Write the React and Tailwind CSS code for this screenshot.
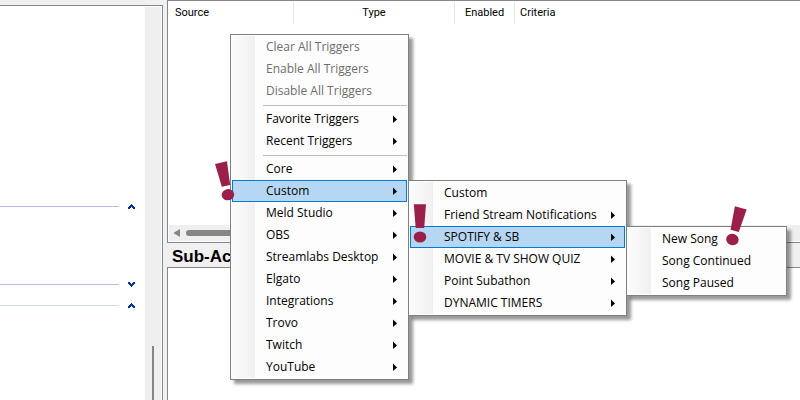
import React from "react";

const mainItems = [
  { label: "Clear All Triggers", disabled: true },
  { label: "Enable All Triggers", disabled: true },
  { label: "Disable All Triggers", disabled: true },
  { separator: true },
  { label: "Favorite Triggers", more: true },
  { label: "Recent Triggers", more: true },
  { separator: true },
  { label: "Core", more: true },
  {
    label: "Custom",
    more: true,
    submenu: {
      width: "w-[219px]",
      items: [
        { label: "Custom" },
        { label: "Friend Stream Notifications", more: true },
        {
          label: "SPOTIFY & SB",
          more: true,
          submenu: {
            width: "w-[161px]",
            items: [
              { label: "New Song" },
              { label: "Song Continued" },
              { label: "Song Paused" },
            ],
          },
        },
        { label: "MOVIE & TV SHOW QUIZ", more: true },
        { label: "Point Subathon", more: true },
        { label: "DYNAMIC TIMERS", more: true },
      ],
    },
  },
  { label: "Meld Studio", more: true },
  { label: "OBS", more: true },
  { label: "Streamlabs Desktop", more: true },
  { label: "Elgato", more: true },
  { label: "Integrations", more: true },
  { label: "Trovo", more: true },
  { label: "Twitch", more: true },
  { label: "YouTube", more: true },
];

function Menu({ items, width }) {
  return (
    <ul
      role="menu"
      className={`${width} border border-[#808080] bg-[#fdfdfd] p-px shadow-[4px_4px_3px_rgba(0,0,0,0.4)]`}
    >
      {items.map((item, i) => (
        <MenuRow key={i} item={item} />
      ))}
    </ul>
  );
}

function MenuRow({ item }) {
  const gutter = "bg-linear-to-r from-[#fcfcfc] to-[#f0f0f0]";
  if (item.separator) {
    return (
      <li role="separator" className="flex h-1.5">
        <span className={`w-[23px] ${gutter}`} />
        <span className="ml-2 mt-[3px] h-px flex-1 bg-[#bdbdbd]" />
      </li>
    );
  }
  const open = Boolean(item.submenu);
  return (
    <li role="none" className="relative">
      <button
        type="button"
        role="menuitem"
        disabled={item.disabled}
        className={`flex h-[22px] w-full items-center border text-left ${
          open ? "border-[#0078d7] bg-[#b5d7f3]" : "border-transparent"
        } ${item.disabled ? "text-[#6d6d6d]" : "text-black"}`}
      >
        <span className={`-my-px -ml-px h-[22px] w-[23px] shrink-0 ${open ? "" : gutter}`} />
        <span className="flex-1 whitespace-nowrap pl-[11px]">{item.label}</span>
        {item.more && (
          <svg width="4" height="8" viewBox="0 0 4 8" className="mr-[9px] shrink-0" aria-hidden="true">
            <path d="M0 0.5L4 4.5L0 8Z" fill="#000" />
          </svg>
        )}
      </button>
      {open && (
        <div className="absolute left-full top-0 ml-px">
          <Menu items={item.submenu.items} width={item.submenu.width} />
        </div>
      )}
    </li>
  );
}

function Exclamation({ className }) {
  return (
    <svg width="14" height="40" viewBox="0 0 14 40" className={`absolute ${className}`} aria-hidden="true">
      <path d="M0.8 1.2H13L11.2 25H2.7Z" fill="#9b1f4b" />
      <ellipse cx="7" cy="34" rx="6.3" ry="5.6" fill="#9b1f4b" />
    </svg>
  );
}

function GroupRow({ up, tone, spacing, label }) {
  return (
    <div className={`flex items-center ${spacing}`}>
      <span className={`h-px flex-1 ${tone}`} />
      <button type="button" aria-label={label} className="ml-[9px] mr-[10px] flex h-[5px] w-[7px] items-center">
        <svg width="7" height="5" viewBox="0 0 7 5" className={up ? "" : "rotate-180"} aria-hidden="true">
          <path d="M0 4h1v1h-1zM6 4h1v1h-1zM0 3h3v1h-1v1h-2zM4 3h3v2h-2v-1h-1zM1 2h5v1h-5zM2 1h3v1h-3zM3 0h1v1h-1z" fill="#003399" />
        </svg>
      </button>
    </div>
  );
}

export default function App() {
  return (
    <div className="relative flex min-h-screen gap-1 overflow-hidden bg-[#f0f0f0] font-['Open_Sans','Noto_Sans',sans-serif] text-xs text-black">
      <aside className="mt-[5px] flex w-[163px] shrink-0 border-r border-t border-[#828790] bg-white">
        <div className="flex-1">
          <GroupRow up tone="bg-[#aebfe2]" spacing="mt-[198px]" label="Collapse first group" />
          <GroupRow tone="bg-[#aebfe2]" spacing="mt-[73px]" label="Expand second group" />
          <GroupRow up tone="bg-[#d3dbec]" spacing="mt-4" label="Collapse third group" />
        </div>
        <div className="mr-px mt-px w-4 bg-[#efefef] pt-[339px]">
          <div className="ml-[7px] h-full w-0.5 bg-[#858585]" />
        </div>
      </aside>

      <main className="flex min-w-0 flex-1 flex-col">
        <section className="flex h-[243px] flex-col border-y border-l border-[#828790] bg-white pl-px pt-px">
          <table className="w-full table-fixed border-separate border-spacing-0 font-['Roboto',sans-serif] text-[11px]">
            <thead>
              <tr className="h-[22px]">
                <th className="w-[125px] border-r border-[#e5e5e5] p-0 pl-1.5 text-left font-normal">Source</th>
                <th className="w-[161px] border-r border-[#e5e5e5] p-0 text-center font-normal">Type</th>
                <th className="w-[60px] border-r border-[#e5e5e5] p-0 text-center font-normal">Enabled</th>
                <th className="p-0 pl-[5px] text-left font-normal">Criteria</th>
              </tr>
            </thead>
          </table>
          <div className="mb-px mt-auto flex h-4 items-center bg-[#efefef] pl-[5px]">
            <svg width="6" height="8" viewBox="0 0 6 8" aria-hidden="true">
              <path d="M6 0V8L0 4.6V3.4Z" fill="#858585" />
            </svg>
            <div className="ml-1.5 h-1.5 w-[400px] rounded-full bg-[#858585]" />
          </div>
        </section>
        <h2 className="h-6 pl-[5px] font-['Liberation_Sans',Arial,sans-serif] text-[17px] font-bold leading-7">Sub-Actions</h2>
        <section className="flex-1 border-l border-t border-[#828790] bg-white" />
      </main>

      <div className="absolute left-[230px] top-[34px]">
        <Menu items={mainItems} width="w-[179px]" />
      </div>

      <Exclamation className="left-[218px] top-[161px] -rotate-12" />
      <Exclamation className="left-[413px] top-[203px]" />
      <Exclamation className="left-[729px] top-[206px] rotate-15" />
    </div>
  );
}
